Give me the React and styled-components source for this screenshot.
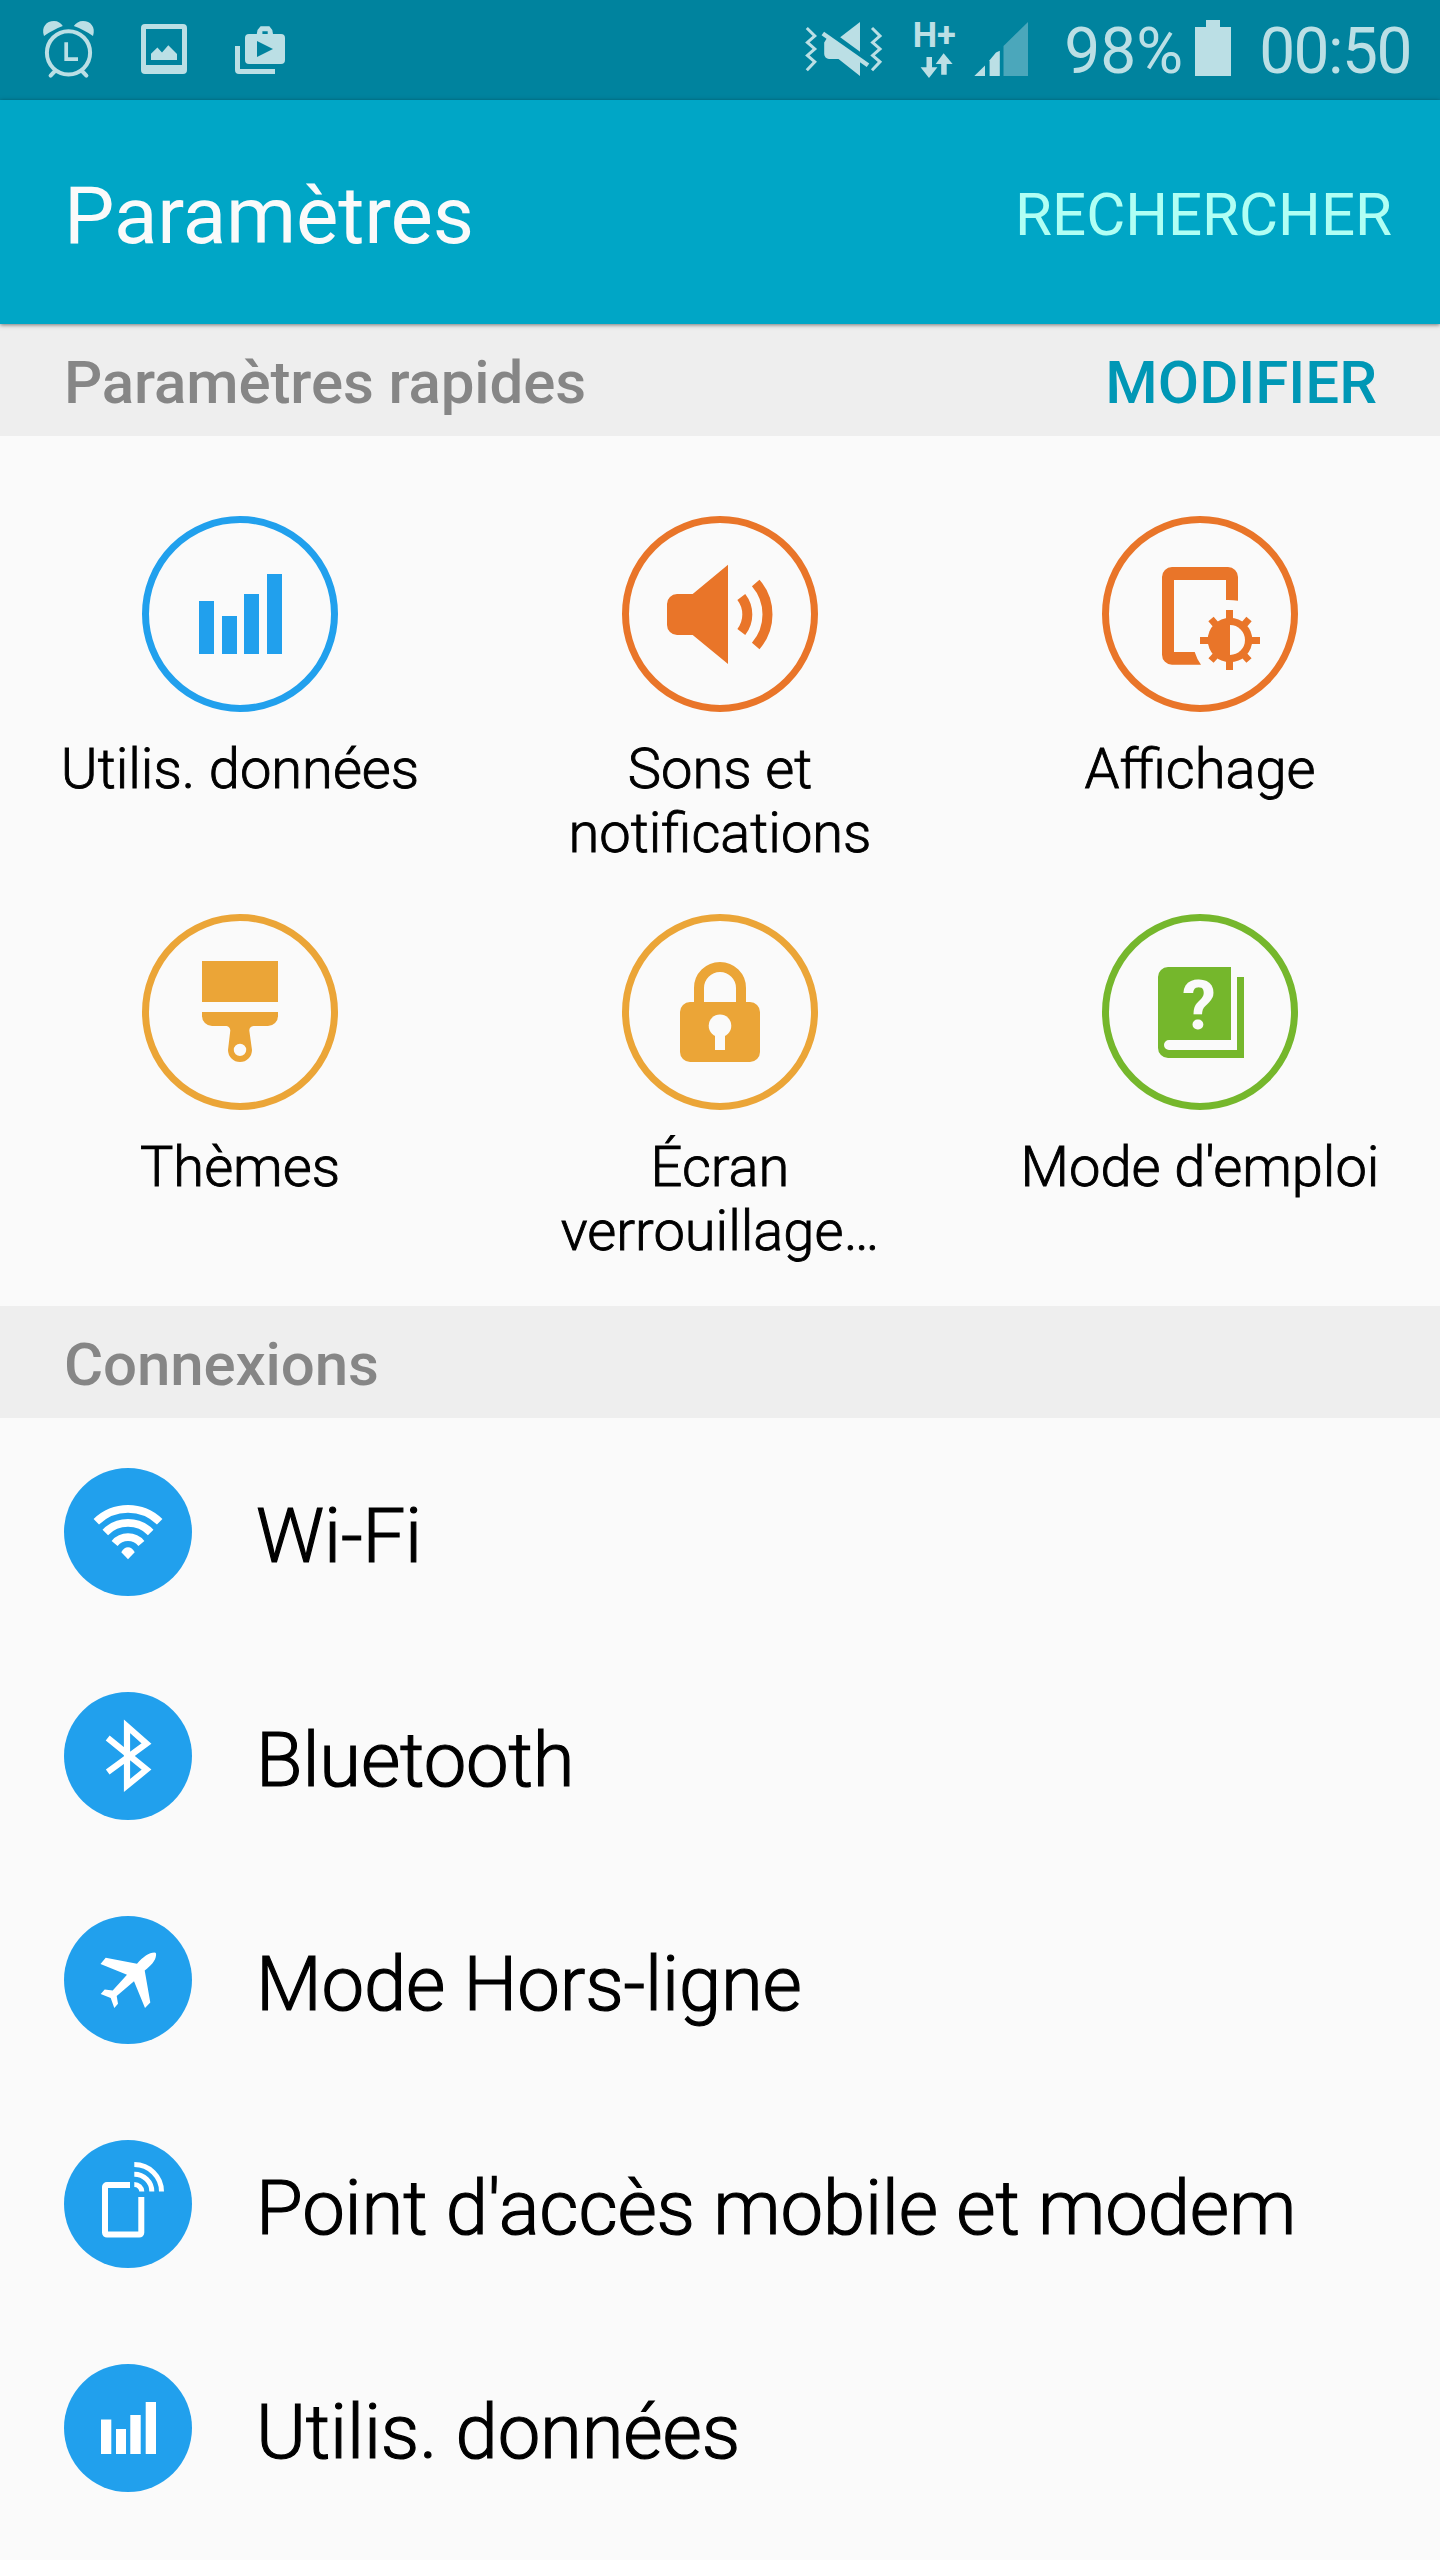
import React from 'react';
import styled, { createGlobalStyle } from 'styled-components';

const GlobalStyle = createGlobalStyle`
  *, *::before, *::after { box-sizing: border-box; }
  body {
    margin: 0;
    background: #fafafa;
    font-family: Roboto, "Noto Sans", sans-serif;
  }
  svg { display: block; flex: none; }
`;

const Screen = styled.main`
  width: 1440px;
  height: 2560px;
  overflow: hidden;
  background: #fafafa;
  color: #000;
`;

const StatusBar = styled.div`
  display: flex;
  align-items: center;
  justify-content: space-between;
  height: 100px;
  padding: 0 29px 0 40px;
  background: #00839e;
  color: #bbdfe5;
`;

const StatusGroup = styled.div`
  display: flex;
  align-items: center;
  gap: ${(p) => p.$gap || 0}px;
`;

const StatusText = styled.span`
  width: ${(p) => p.$width}px;
  padding-top: 4px;
  font-size: 64px;
  line-height: 96px;
  white-space: nowrap;
  text-align: right;
  letter-spacing: ${(p) => p.$spacing || 0}px;
`;

const AppBar = styled.header`
  position: relative;
  display: flex;
  align-items: center;
  justify-content: space-between;
  height: 224px;
  padding: 0 48px 0 64px;
  background: #00a6c6;
  box-shadow: 0 1px 4px rgba(0, 0, 0, 0.5);
`;

const Title = styled.h1`
  margin: 0;
  padding-top: 8px;
  color: #fafafa;
  font-size: 80px;
  font-weight: 400;
  line-height: 96px;
  letter-spacing: -0.15px;
`;

const SearchButton = styled.button`
  border: 0;
  padding: 5px 0 0;
  background: none;
  color: #b0fff4;
  font: 400 60px/72px Roboto, sans-serif;
`;

const SectionHeader = styled.div`
  display: flex;
  align-items: center;
  justify-content: space-between;
  height: 112px;
  padding: 5px 63px 0 64px;
  background: #eee;
  color: #868686;
  font-size: 60px;
  font-weight: 500;
  line-height: 72px;
`;

const SectionTitle = styled.h2`
  margin: 0;
  font: inherit;
  letter-spacing: -0.12px;
`;

const EditButton = styled.button`
  border: 0;
  padding: 0;
  background: none;
  color: #0097b5;
  font: inherit;
`;

const TileGrid = styled.div`
  display: grid;
  grid-template-columns: repeat(3, 480px);
  grid-auto-rows: 398px;
  height: 870px;
  padding-top: 80px;
`;

const Tile = styled.div`
  display: flex;
  flex-direction: column;
  align-items: center;
  gap: 25px;
`;

const TileLabel = styled.div`
  font-size: 56px;
  font-weight: 300;
  line-height: 64px;
  text-align: center;
  white-space: pre-line;
  -webkit-text-stroke: 0.9px #000;
`;

const SettingsList = styled.ul`
  margin: 0;
  padding: 2px 0 0;
  list-style: none;
`;

const SettingsRow = styled.li`
  display: flex;
  align-items: center;
  gap: 64px;
  height: 224px;
  padding: 0 64px;
`;

const RowLabel = styled.span`
  padding-top: 8px;
  font-size: 76px;
  font-weight: 300;
  letter-spacing: -0.16px;
  line-height: 92px;
  white-space: nowrap;
  -webkit-text-stroke: 1.2px #000;
`;

/* Status bar icons */

const LeftStatusIcons = () => (
  <StatusGroup $gap={45}>
    <svg width="56" height="60" viewBox="40 20 56 60" fill="none" stroke="currentColor">
      <circle cx="68.5" cy="52.8" r="21.6" strokeWidth="4" />
      <path d="M66.2 42.3V59.2H78" strokeWidth="3.7" />
      <path d="M55 71L50.6 75.6M82 71L86.4 75.6" strokeWidth="4" strokeLinecap="round" />
      <path
        d="M44 36C41 27 46.5 21 54 21C58 21 61 23 62.8 26C56 28.5 50 32 44 36ZM93 36C96 27 90.5 21 83 21C79 21 76 23 73.8 26C81 28.5 87 32 93 36Z"
        fill="currentColor"
        stroke="none"
      />
    </svg>
    <svg width="46" height="60" viewBox="141 20 46 60" fill="currentColor">
      <path
        fillRule="evenodd"
        d="M145 24H183A4 4 0 0 1 187 28V70A4 4 0 0 1 183 74H145A4 4 0 0 1 141 70V28A4 4 0 0 1 145 24ZM146 29V65H182V29Z"
      />
      <path d="M151 60V53.7L157.4 47.6L162 52.4L168.3 45.3L177 54V60Z" />
    </svg>
    <svg width="54" height="60" viewBox="232 20 54 60" fill="currentColor">
      <path
        fillRule="evenodd"
        d="M249 34H256.8L257.5 30L260.6 26.3H269.4L272.3 30L273 34H281A4 4 0 0 1 285 38V60A4 4 0 0 1 281 64H249A4 4 0 0 1 245 60V38A4 4 0 0 1 249 34ZM262.4 34H267.7V31.3H262.4ZM257 41V57L273 49Z"
      />
      <path d="M235 46H240V69H275V74H239A4 4 0 0 1 235 70Z" />
    </svg>
  </StatusGroup>
);

const zigzag = (x) =>
  `M${x} 28L${x + 8} 36L${x + 0.6} 42.4L${x + 8} 49L${x + 0.6} 55.4L${x + 8} 61.8L${x} 70.3`;

const VibrateIcon = () => (
  <svg width="96" height="60" viewBox="802 20 96 60" fill="currentColor">
    <path d={zigzag(806.8)} fill="none" stroke="currentColor" strokeWidth="3" />
    <path d={zigzag(872)} fill="none" stroke="currentColor" strokeWidth="3" />
    <path d="M840.2 37.3L860 22V51.7Z" />
    <path d="M822.8 33.5L868 65.3" stroke="currentColor" strokeWidth="4.4" />
    <path d="M827 38L860 60.5V76L838.5 59H829A5 5 0 0 1 824.2 54V42.5Z" />
  </svg>
);

const NetworkIcon = () => (
  <svg width="76" height="100" viewBox="898 0 76 100" fill="currentColor">
    <text x="912.7" y="46.6" fontFamily="Roboto" fontSize="34.5" fontWeight="700">H</text>
    <text x="937" y="46.6" fontFamily="Roboto" fontSize="34.5" fontWeight="700">+</text>
    <path d="M926.5 57H932V67.3H937.4L929 78L920.6 67.3H926.5Z" />
    <path d="M941.2 74.7H946.7V64H952.6L943.6 53.3L935.7 64H941.2Z" />
  </svg>
);

const SignalIcon = () => (
  <svg width="54" height="60" viewBox="974 20 54 60" fill="currentColor">
    <path d="M974.3 76H985V65.6Z" />
    <path d="M989.6 76V60.3L996 52.5L999.8 50.7V76Z" />
    <path d="M1003.5 76V46L1028 22V76Z" opacity="0.4" />
  </svg>
);

const BatteryIcon = () => (
  <svg width="48" height="60" viewBox="1183 20 48 60" fill="currentColor">
    <path d="M1195 76V27H1206V20H1220V27H1231V76Z" />
  </svg>
);

/* Outlined icons of the quick settings */

const BLUE = '#21a0ed';
const ORANGE = '#e97529';
const AMBER = '#eba537';
const GREEN = '#75b72c';

const RingIcon = ({ color, children }) => (
  <svg width="196" height="196" viewBox="0 0 196 196" fill={color}>
    <circle cx="98" cy="98" r="94.5" fill="none" stroke={color} strokeWidth="7" />
    {children}
  </svg>
);

const DataTile = () => (
  <RingIcon color={BLUE}>
    <path d="M57 85H72V138H57ZM80 100H95V138H80ZM102 78H117V138H102ZM125 58H140V138H125Z" />
  </RingIcon>
);

const SoundTile = () => (
  <RingIcon color={ORANGE}>
    <path d="M55 78H70.7L106 48.7V148L70.7 119H55A10 10 0 0 1 45 109V88A10 10 0 0 1 55 78Z" />
    <path
      d="M119.3 81A28.5 28.5 0 0 1 119.3 116M133.7 67A48 48 0 0 1 133.7 130"
      fill="none"
      stroke={ORANGE}
      strokeWidth="10"
    />
  </RingIcon>
);

const DisplayTile = () => (
  <RingIcon color={ORANGE}>
    <path d="M70 51H126A10 10 0 0 1 136 61V84.8Q130 83.7 124 84V64H72V136H92.7Q95 143.500 99 148.7H70A10 10 0 0 1 60 138.700V61A10 10 0 0 1 70 51Z" />
    <path
      d="M127.500 94V104M127.500 144V154M98 124.500H108M148 124.500H158M109 103L115 110M147 103L141 110M109 144.500L115 138M147 144.500L141 138"
      stroke={ORANGE}
      strokeWidth="7"
    />
    <circle cx="128" cy="124" r="22.3" />
    <path d="M128 109A15 15 0 0 1 128 139Z" fill="#fafafa" />
  </RingIcon>
);

const ThemeTile = () => (
  <RingIcon color={AMBER}>
    <path d="M60 47H136V88H60Z" />
    <path
      fillRule="evenodd"
      d="M60 98H136V102A10 10 0 0 1 126 112H111.500Q107.300 112.500 107.300 116.500L110 136A12 12 0 0 1 86 136L88.300 116.500Q88 112.500 84.500 112H70A10 10 0 0 1 60 102ZM98 129.700A6.200 6.200 0 1 0 98 142.100A6.200 6.200 0 1 0 98 129.700Z"
    />
  </RingIcon>
);

const LockTile = () => (
  <RingIcon color={AMBER}>
    <path d="M77 90V74A21 21 0 0 1 119 74V90" fill="none" stroke={AMBER} strokeWidth="10" />
    <rect x="58" y="88" width="80" height="60" rx="10" />
    <circle cx="98" cy="111.700" r="11.300" fill="#fafafa" />
    <rect x="93" y="118" width="10" height="18" fill="#fafafa" />
  </RingIcon>
);

const ManualTile = () => (
  <RingIcon color={GREEN}>
    <path d="M66 53H129V126H67A5 5 0 0 0 67 136H135V63H142V144H66A10 10 0 0 1 56 134V63A10 10 0 0 1 66 53Z" />
    <text
      x="97"
      y="115"
      textAnchor="middle"
      fontFamily="Roboto"
      fontSize="68"
      fontWeight="700"
      fill="#fafafa"
    >
      ?
    </text>
  </RingIcon>
);

/* Filled icons of the settings list */

const DiscIcon = ({ children }) => (
  <svg width="128" height="128" viewBox="0 0 128 128" fill="#fff">
    <circle cx="64" cy="64" r="64" fill={BLUE} />
    {children}
  </svg>
);

const WifiIcon = () => (
  <DiscIcon>
    <path
      d="M32.300 53.700A45.400 45.400 0 0 1 95.700 53.700M41.300 64.400A32 32 0 0 1 86.700 64.400M50.600 75.400A17.500 17.500 0 0 1 77.400 75.400"
      fill="none"
      stroke="#fff"
      strokeWidth="7.800"
    />
    <path d="M57.300 84.300Q60 79.300 64 79.300Q68 79.300 70.700 84.300L64 91.300Z" />
  </DiscIcon>
);

const BluetoothIcon = () => (
  <DiscIcon>
    <path
      d="M43.700 46L82.500 77.600L63 93.500V34.300L82.500 51.600L43.700 80"
      fill="none"
      stroke="#fff"
      strokeWidth="6.200"
      strokeMiterlimit="8"
    />
  </DiscIcon>
);

const PlaneIcon = () => (
  <DiscIcon>
    <path d="M73 47.700C79 41 85 36.500 90.500 36.500C92 36.500 92.300 37.500 92 39.500C91.500 45 87 49.500 80.700 54.600L86.300 86.400L81 92L70 65.200L52.700 80L54 87.700L50.300 92L46.700 82L36.700 77.900L40.700 73.400L48.700 74.600L63 58.700L36.500 48L41.700 41.700Z" />
  </DiscIcon>
);

const HotspotIcon = () => (
  <DiscIcon>
    <path
      d="M66 45H43A2 2 0 0 0 41 47V92.600A2 2 0 0 0 43 94.600H75.300A2 2 0 0 0 77.300 92.600V57"
      fill="none"
      stroke="#fff"
      strokeWidth="6"
    />
    <path
      d="M70.300 24.500A27.200 27 0 0 1 97.500 51.500M70.300 34.300A17.500 17.200 0 0 1 87.800 51.500M70.300 44.500A7.500 7 0 0 1 77.800 51.500"
      fill="none"
      stroke="#fff"
      strokeWidth="5"
    />
  </DiscIcon>
);

const DataIcon = () => (
  <DiscIcon>
    <path d="M37 55.600H47.300V90H37ZM52 65H62V90H52ZM66.300 51H76.700V90H66.300ZM81.700 38H92V90H81.700Z" />
  </DiscIcon>
);

const TILES = [
  { label: 'Utilis. données', Icon: DataTile },
  { label: 'Sons et\nnotifications', Icon: SoundTile },
  { label: 'Affichage', Icon: DisplayTile },
  { label: 'Thèmes', Icon: ThemeTile },
  { label: 'Écran\nverrouillage…', Icon: LockTile },
  { label: "Mode d'emploi", Icon: ManualTile },
];

const CONNECTIONS = [
  { label: 'Wi-Fi', Icon: WifiIcon },
  { label: 'Bluetooth', Icon: BluetoothIcon },
  { label: 'Mode Hors-ligne', Icon: PlaneIcon },
  { label: "Point d'accès mobile et modem", Icon: HotspotIcon },
  { label: 'Utilis. données', Icon: DataIcon },
];

export default function App() {
  return (
    <>
      <GlobalStyle />
      <Screen>
        <StatusBar>
          <LeftStatusIcons />
          <StatusGroup>
            <VibrateIcon />
            <NetworkIcon />
            <SignalIcon />
            <StatusText $width={155}>98%</StatusText>
            <BatteryIcon />
            <StatusText $width={180} $spacing={-1.5}>00:50</StatusText>
          </StatusGroup>
        </StatusBar>

        <AppBar>
          <Title>Paramètres</Title>
          <SearchButton>RECHERCHER</SearchButton>
        </AppBar>

        <SectionHeader>
          <SectionTitle>Paramètres rapides</SectionTitle>
          <EditButton>MODIFIER</EditButton>
        </SectionHeader>
        <TileGrid>
          {TILES.map(({ label, Icon }) => (
            <Tile key={label}>
              <Icon />
              <TileLabel>{label}</TileLabel>
            </Tile>
          ))}
        </TileGrid>

        <SectionHeader>
          <SectionTitle>Connexions</SectionTitle>
        </SectionHeader>
        <SettingsList>
          {CONNECTIONS.map(({ label, Icon }) => (
            <SettingsRow key={label}>
              <Icon />
              <RowLabel>{label}</RowLabel>
            </SettingsRow>
          ))}
        </SettingsList>
      </Screen>
    </>
  );
}
